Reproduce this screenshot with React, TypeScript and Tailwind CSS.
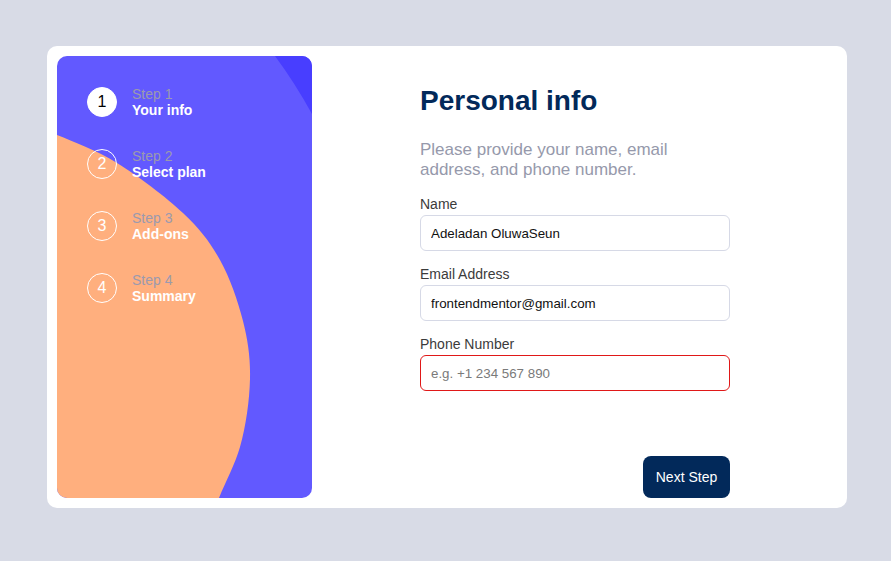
import React from "react";

const steps = [
  { n: 1, label: "Step 1", name: "Your info", active: true },
  { n: 2, label: "Step 2", name: "Select plan", active: false },
  { n: 3, label: "Step 3", name: "Add-ons", active: false },
  { n: 4, label: "Step 4", name: "Summary", active: false },
];

function Field({
  label,
  value,
  placeholder,
  error,
}: {
  label: string;
  value?: string;
  placeholder?: string;
  error?: boolean;
}) {
  return (
    <label className="flex flex-col">
      <span className="text-[14px] leading-[16px] text-[#3b3b3b]">{label}</span>
      <input
        readOnly
        value={value ?? ""}
        placeholder={placeholder}
        className={
          "mt-[3px] h-[36px] w-full rounded-[6px] border bg-white px-[10px] text-[13.333px] text-[#111] outline-none placeholder:text-[#7a7a7a] " +
          (error ? "border-[#e01818]" : "border-[#d6d9e6]")
        }
      />
    </label>
  );
}

export default function App() {
  return (
    <div
      className="min-h-[561px] bg-[#d8dbe6] pt-[46px] pl-[47px]"
      style={{ fontFamily: '"Liberation Sans", Arial, sans-serif' }}
    >
      <div className="flex h-[462px] w-[800px] rounded-[10px] bg-white p-[10px]">
        <aside className="relative h-[442px] w-[255px] overflow-hidden rounded-[10px] bg-[#6259ff]">
          <svg
            className="absolute inset-0"
            width="255"
            height="442"
            viewBox="0 0 255 442"
          >
            <path d="M218 0 Q 238 27 255 58 L255 0 Z" fill="#483eff" />
            <path
              d="M0 79 C16.7 85.8 39 94 60 107 C81 120 108.8 140.8 126 157 C143.2 173.2 153 186 163 204 C173 222 181 245.2 186 265 C191 284.8 193.5 302 193 323 C192.5 344 189 370 183 391 C178.2 407.8 169 425 162 442 L152 466 L0 466 Z"
              fill="#ffaf7e"
            />
          </svg>
          <ol className="relative flex flex-col gap-[30px] pl-[30px] pt-[30px]">
            {steps.map((s) => (
              <li key={s.n} className="flex h-[32px] items-center gap-[15px]">
                <span
                  className={
                    "flex h-[30px] w-[30px] items-center justify-center rounded-full border border-white text-[16px] " +
                    (s.active ? "bg-white text-black" : "text-white")
                  }
                >
                  {s.n}
                </span>
                <span className="flex flex-col">
                  <span className="text-[14px] leading-[16px] text-[#9b9aae]">{s.label}</span>
                  <span className="text-[14px] font-bold leading-[16px] text-white">{s.name}</span>
                </span>
              </li>
            ))}
          </ol>
        </aside>
        <main className="ml-[108px] flex w-[310px] flex-col pt-[28px]">
          <h1 className="text-[28px] font-bold leading-[34px] text-[#02295a]">Personal info</h1>
          <p className="mt-[22px] text-[17px] leading-[20px] text-[#9699ab]">
            Please provide your name, email address, and phone number.
          </p>
          <div className="mt-[16px] flex flex-col gap-[15px]">
            <Field label="Name" value="Adeladan OluwaSeun" />
            <Field label="Email Address" value="frontendmentor@gmail.com" />
            <Field label="Phone Number" placeholder="e.g. +1 234 567 890" error />
          </div>
          <button className="mt-auto self-end h-[42px] w-[87px] rounded-[8px] bg-[#02295a] text-[14px] text-white">
            Next Step
          </button>
        </main>
      </div>
    </div>
  );
}
